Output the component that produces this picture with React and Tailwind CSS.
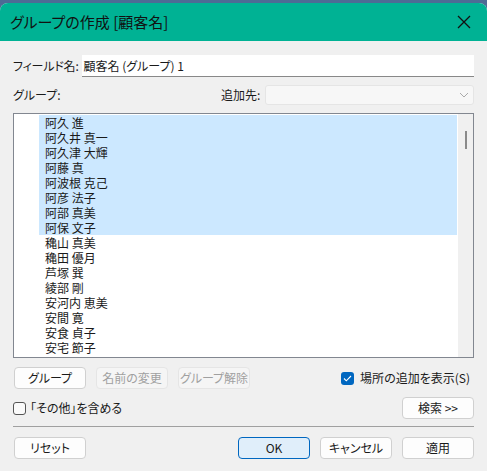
import React from "react";

const font = { fontFamily: '"Noto Sans CJK JP", "Noto Sans", sans-serif' };

const names = [
  ["阿久 進", true],
  ["阿久井 真一", true],
  ["阿久津 大輝", true],
  ["阿藤 真", true],
  ["阿波根 克己", true],
  ["阿彦 法子", true],
  ["阿部 真美", true],
  ["阿保 文子", true],
  ["穐山 真美", false],
  ["穐田 優月", false],
  ["芦塚 巽", false],
  ["綾部 剛", false],
  ["安河内 恵美", false],
  ["安間 寛", false],
  ["安食 貞子", false],
  ["安宅 節子", false],
  ["安達 和子", false],
];

function Btn({ children, disabled, primary, className = "" }) {
  const base = "h-[22px] w-[72px] rounded-[4px] border text-[12px] leading-none whitespace-nowrap flex items-center justify-center";
  const look = primary
    ? "border-[#0067c0] bg-[#e0eefa] text-[#1a1a1a]"
    : disabled
    ? "border-[#e5e5e5] bg-[#f5f5f5] text-[#a0a0a0]"
    : "border-[#d0d0d0] bg-[#fdfdfd] text-[#1a1a1a]";
  return <button className={`${base} ${look} ${className}`}>{children}</button>;
}

export default function App() {
  return (
    <div className="w-[487px] h-[471px] bg-[#4d6b95] overflow-hidden [font-feature-settings:'palt']" style={font}>
      <div className="mt-[3px] h-[468px] rounded-t-[8px] overflow-hidden bg-[#f0f0f0] flex flex-col">
        {/* タイトルバー */}
        <div className="h-[38px] bg-[#00b294] flex items-center justify-between pl-[10px] pr-[16px]">
          <span className="text-[15px] text-[#111] whitespace-nowrap">グループの作成 [顧客名]</span>
          <svg width="14" height="14" viewBox="0 0 14 14">
            <path d="M1 1L13 13M13 1L1 13" stroke="#111" strokeWidth="1.3" fill="none" />
          </svg>
        </div>

        <div className="px-[13px] text-[12px] text-[#1a1a1a] flex flex-col whitespace-nowrap">
          {/* フィールド名 */}
          <div className="flex items-center mt-[14px] h-[22px]">
            <span className="shrink-0 mr-[3px] tracking-[-0.2px]">フィールド名:</span>
            <div className="flex-1 h-[22px] bg-white border-b border-[#888] flex items-center pl-[2px]">
              顧客名 (グループ) 1
            </div>
          </div>

          {/* グループ / 追加先 */}
          <div className="flex items-center mt-[8px] h-[20px]">
            <span className="w-[208px] shrink-0">グループ:</span>
            <span className="w-[44px] shrink-0">追加先:</span>
            <div className="flex-1 h-[20px] bg-[#f7f7f7] border border-[#e5e5e5] rounded-[3px] flex items-center justify-end pr-[4px]">
              <svg width="10" height="6" viewBox="0 0 10 6">
                <path d="M1 1L5 5L9 1" stroke="#aaa" strokeWidth="1" fill="none" />
              </svg>
            </div>
          </div>

          {/* リスト */}
          <div className="mt-[8px] h-[245px] border border-[#828790] bg-white flex overflow-hidden">
            <div className="flex-1 pl-[25px] pt-[1px] overflow-hidden">
              {names.map(([n, sel], i) => (
                <div
                  key={i}
                  className={`h-[15px] leading-[15px] pl-[6px] overflow-hidden ${sel ? "bg-[#cce8ff]" : ""}`}
                >
                  {n}
                </div>
              ))}
            </div>
            <div className="w-[16px] bg-[#f0f0f0] border-l border-white relative">
              <div className="absolute left-[7px] top-[17px] w-[2px] h-[18px] bg-[#8a8a8a]" />
            </div>
          </div>

          {/* ボタン行 */}
          <div className="flex items-center mt-[9px]">
            <Btn className="ml-[1px]">グループ</Btn>
            <Btn disabled className="ml-[10px]">名前の変更</Btn>
            <Btn disabled className="ml-[10px]">グループ解除</Btn>
            <div className="ml-auto flex items-center mr-[4px]">
              <div className="w-[13px] h-[13px] rounded-[3px] bg-[#0067c0] flex items-center justify-center">
                <svg width="9" height="7" viewBox="0 0 9 7">
                  <path d="M1 3.5L3.3 5.8L8 1" stroke="#fff" strokeWidth="1.1" fill="none" />
                </svg>
              </div>
              <span className="ml-[6px]">場所の追加を表示(S)</span>
            </div>
          </div>

          {/* その他 / 検索 */}
          <div className="flex items-center mt-[8px]">
            <div className="w-[13px] h-[13px] rounded-[3px] border border-[#555] bg-[#fafafa]" />
            <span className="ml-[4px]">「その他」を含める</span>
            <Btn className="ml-auto">検索 &gt;&gt;</Btn>
          </div>

          <div className="mt-[7px] border-t border-[#a0a0a0]" />

          {/* 下部ボタン */}
          <div className="flex items-center mt-[10px]">
            <Btn className="ml-[1px]">リセット</Btn>
            <Btn primary className="ml-auto">OK</Btn>
            <Btn className="ml-[10px]">キャンセル</Btn>
            <Btn className="ml-[10px]">適用</Btn>
          </div>
        </div>
      </div>
    </div>
  );
}
